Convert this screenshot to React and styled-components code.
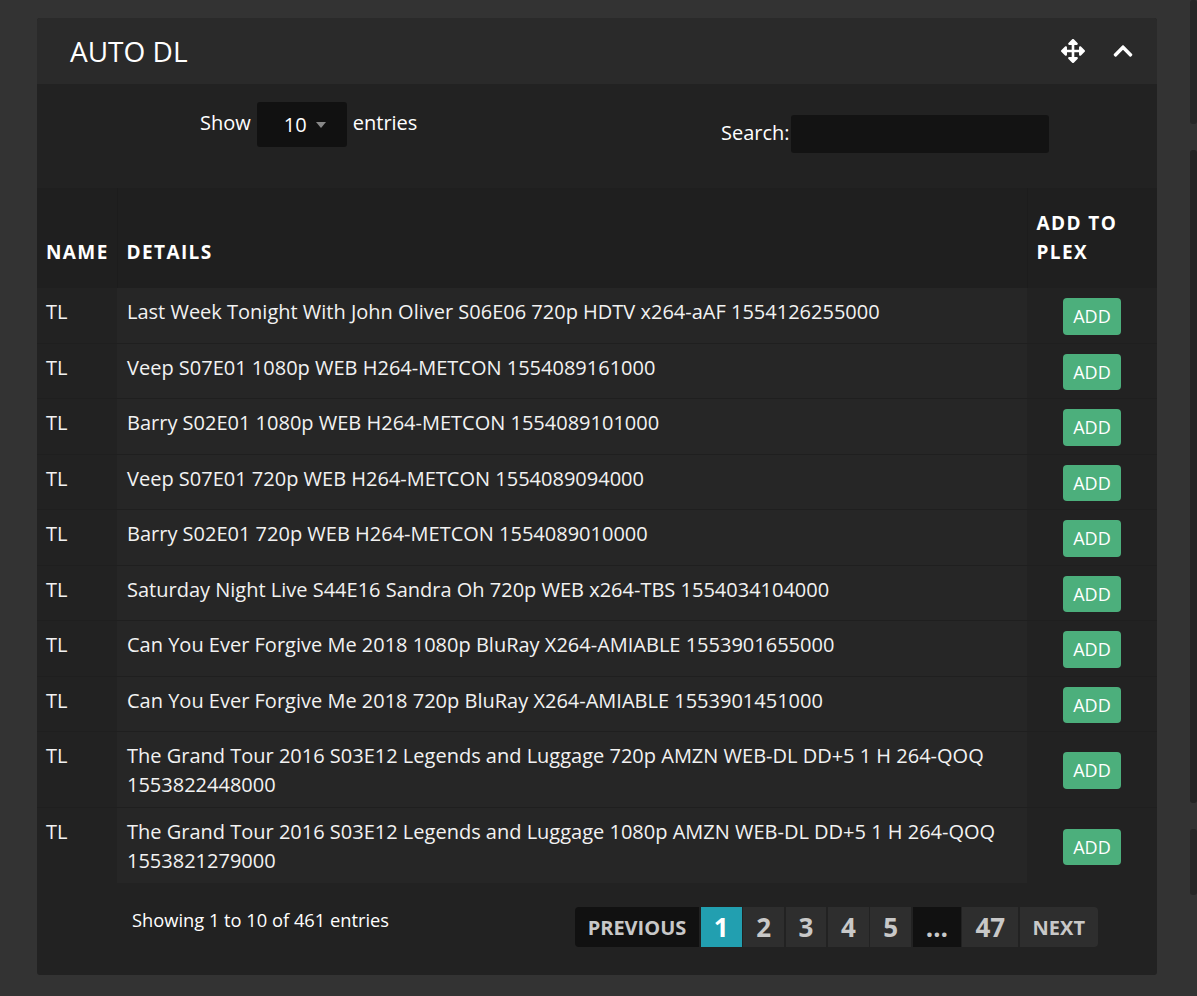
import styled, { createGlobalStyle } from "styled-components";
import { FaArrowsAlt, FaChevronUp } from "react-icons/fa";

const GlobalStyle = createGlobalStyle`
  html, body {
    margin: 0;
    background: #333;
  }
  body {
    font-family: "Open Sans", "Liberation Sans", sans-serif;
    color: #fff;
  }
`;

const rows = [
  "Last Week Tonight With John Oliver S06E06 720p HDTV x264-aAF 1554126255000",
  "Veep S07E01 1080p WEB H264-METCON 1554089161000",
  "Barry S02E01 1080p WEB H264-METCON 1554089101000",
  "Veep S07E01 720p WEB H264-METCON 1554089094000",
  "Barry S02E01 720p WEB H264-METCON 1554089010000",
  "Saturday Night Live S44E16 Sandra Oh 720p WEB x264-TBS 1554034104000",
  "Can You Ever Forgive Me 2018 1080p BluRay X264-AMIABLE 1553901655000",
  "Can You Ever Forgive Me 2018 720p BluRay X264-AMIABLE 1553901451000",
  "The Grand Tour 2016 S03E12 Legends and Luggage 720p AMZN WEB-DL DD+5 1 H 264-QOQ 1553822448000",
  "The Grand Tour 2016 S03E12 Legends and Luggage 1080p AMZN WEB-DL DD+5 1 H 264-QOQ 1553821279000",
];

const pages = [
  { label: "Previous", kind: "nav", off: true },
  { label: "1", active: true },
  { label: "2" },
  { label: "3" },
  { label: "4" },
  { label: "5" },
  { label: "…", off: true },
  { label: "47" },
  { label: "Next", kind: "nav" },
];

const Page = styled.div`
  display: flex;
  align-items: flex-start;
  height: 996px;
  overflow: hidden;
`;

const MainColumn = styled.div`
  padding: 18px 0 0 37px;
  width: 1120px;
  flex-shrink: 0;
`;

const SideColumn = styled.div`
  margin-left: 33px;
  flex: 1;
  display: flex;
  flex-direction: column;
  gap: 26px;
`;

const SidePanel = styled.div`
  height: ${(p) => p.h}px;
  background: ${(p) => p.bg};
  border-radius: 3px;
`;

const Panel = styled.section`
  background: #222;
  border-radius: 3px;
  overflow: hidden;
`;

const PanelHeader = styled.header`
  height: 66px;
  background: #2a2a2a;
  display: flex;
  align-items: center;
  padding: 0 23px 0 33px;
`;

const Title = styled.h2`
  margin: 0;
  flex: 1;
  font-size: 28px;
  font-weight: 400;
  line-height: 1;
`;

const HeaderTools = styled.div`
  display: flex;
  align-items: center;
  gap: 27px;
  color: #fff;

  svg {
    display: block;
  }
`;

const Controls = styled.div`
  display: grid;
  grid-template-columns: 1fr 1fr;
  height: 104px;
`;

const LengthControl = styled.label`
  display: flex;
  align-items: center;
  gap: 6px;
  padding: 18px 0 0 163px;
  align-self: start;
  font-size: 20px;
`;

const ControlText = styled.span`
  padding-bottom: 4px;
`;

const Select = styled.div`
  width: 90px;
  height: 45px;
  box-sizing: border-box;
  background: #111;
  border-radius: 3px;
  display: flex;
  align-items: center;
  padding-left: 27px;
  gap: 9px;
  font-size: 20px;
`;

const Caret = styled.span`
  width: 0;
  height: 0;
  border-left: 5px solid transparent;
  border-right: 5px solid transparent;
  border-top: 6px solid #888;
`;

const SearchControl = styled.label`
  display: flex;
  align-items: center;
  gap: 1px;
  padding: 31px 0 0 124px;
  align-self: start;
  font-size: 20px;
`;

const SearchInput = styled.div`
  width: 258px;
  height: 38px;
  background: #131313;
  border-radius: 3px;
`;

const Table = styled.table`
  width: 100%;
  border-collapse: collapse;
  table-layout: fixed;
`;

const Th = styled.th`
  background: #1f1f1f;
  text-align: left;
  vertical-align: bottom;
  padding: 21px 10px 21px 9px;
  font-size: 19px;
  font-weight: 700;
  letter-spacing: 1.4px;
  line-height: 1.5;
  text-transform: uppercase;
  border-left: 1px solid #1c1c1c;

  &:first-child {
    border-left: none;
  }
`;

const Td = styled.td`
  background: ${(p) => (p.sorted ? "#262626" : "#222")};
  border-top: 1px solid #1f1f1f;
  padding: 10px 10px 8px;
  vertical-align: ${(p) => (p.middle ? "middle" : "top")};
  text-align: ${(p) => (p.middle ? "center" : "left")};
  font-size: 20px;
  line-height: 1.43;
  color: #f2f2f2;

  &:first-child {
    padding-left: 9px;
  }
`;

const AddButton = styled.button`
  display: inline-block;
  vertical-align: middle;
  font-family: inherit;
  font-size: 18px;
  line-height: 24.5px;
  padding: 6px 10px;
  border: none;
  border-radius: 4px;
  background: #4caf7c;
  color: #fff;
`;

const Footer = styled.div`
  display: flex;
  align-items: flex-start;
  justify-content: space-between;
  padding: 24px 59px 28px 95px;
`;

const Info = styled.div`
  font-size: 18.3px;
`;

const Pagination = styled.nav`
  display: flex;
  gap: 1.5px;
  border-radius: 4px;
  overflow: hidden;
`;

const PageButton = styled.span`
  height: 40px;
  box-sizing: border-box;
  padding: 0 13px;
  display: flex;
  align-items: center;
  justify-content: center;
  font-weight: 700;
  font-size: ${(p) => (p.nav ? "20px" : "26px")};
  text-transform: uppercase;
  color: ${(p) => (p.active ? "#fff" : "#c8c8c8")};
  background: ${(p) => (p.active ? "#229fb0" : p.off ? "#111" : "#2e2e2e")};
`;

export default function App() {
  return (
    <Page>
      <GlobalStyle />
      <MainColumn>
        <Panel>
          <PanelHeader>
            <Title>AUTO DL</Title>
            <HeaderTools>
              <FaArrowsAlt size={24} />
              <FaChevronUp size={22} />
            </HeaderTools>
          </PanelHeader>

          <Controls>
            <LengthControl>
              <ControlText>Show</ControlText>
              <Select>
                10
                <Caret />
              </Select>
              <ControlText>entries</ControlText>
            </LengthControl>
            <SearchControl>
              <ControlText>Search:</ControlText>
              <SearchInput />
            </SearchControl>
          </Controls>

          <Table>
            <colgroup>
              <col style={{ width: 80 }} />
              <col />
              <col style={{ width: 130 }} />
            </colgroup>
            <thead>
              <tr>
                <Th>Name</Th>
                <Th>Details</Th>
                <Th>Add to Plex</Th>
              </tr>
            </thead>
            <tbody>
              {rows.map((r) => (
                <tr key={r}>
                  <Td>TL</Td>
                  <Td sorted>{r}</Td>
                  <Td middle>
                    <AddButton>ADD</AddButton>
                  </Td>
                </tr>
              ))}
            </tbody>
          </Table>

          <Footer>
            <Info>Showing 1 to 10 of 461 entries</Info>
            <Pagination>
              {pages.map((p) => (
                <PageButton
                  key={p.label}
                  nav={p.kind === "nav"}
                  active={p.active}
                  off={p.off}
                >
                  {p.label}
                </PageButton>
              ))}
            </Pagination>
          </Footer>
        </Panel>
      </MainColumn>

      <SideColumn>
        <SidePanel h={124} bg="#272727" />
        <SidePanel h={653} bg="#232323" />
        <SidePanel h={66} bg="#262626" />
      </SideColumn>
    </Page>
  );
}
